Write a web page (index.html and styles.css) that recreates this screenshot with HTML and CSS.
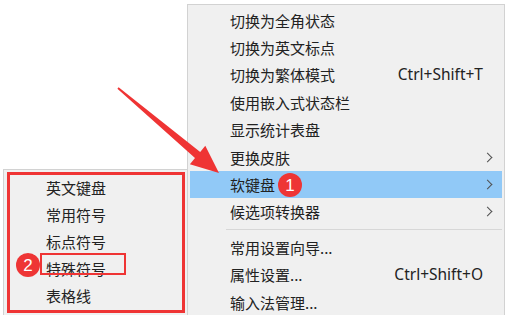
FILE: index.html
```html
<!DOCTYPE html>
<html lang="zh-CN">
<head>
<meta charset="utf-8">
<link rel="stylesheet" href="styles.css">
</head>
<body>
<div class="canvas">
  <div class="menu main-menu">
    <div class="item"><span class="label">切换为全角状态</span></div>
    <div class="item"><span class="label">切换为英文标点</span></div>
    <div class="item"><span class="label">切换为繁体模式</span><span class="key">Ctrl+Shift+T</span></div>
    <div class="item"><span class="label">使用嵌入式状态栏</span></div>
    <div class="item"><span class="label">显示统计表盘</span></div>
    <div class="item"><span class="label">更换皮肤</span><span class="chev"></span></div>
    <div class="item active"><span class="label">软键盘</span><span class="chev"></span></div>
    <div class="item"><span class="label">候选项转换器</span><span class="chev"></span></div>
    <div class="sep"></div>
    <div class="item"><span class="label">常用设置向导...</span></div>
    <div class="item"><span class="label">属性设置...</span><span class="key">Ctrl+Shift+O</span></div>
    <div class="item"><span class="label">输入法管理...</span></div>
  </div>

  <div class="menu sub-menu">
    <div class="sub-item">英文键盘</div>
    <div class="sub-item">常用符号</div>
    <div class="sub-item">标点符号</div>
    <div class="sub-item">特殊符号</div>
    <div class="sub-item">表格线</div>
  </div>

  <div class="box-big"></div>
  <div class="box-small"></div>

  <svg class="arrow" width="513" height="315" viewBox="0 0 513 315">
    <polygon fill="#ef3434" points="117.4,88.8 118.6,87.2 200.2,151.9 205.3,145.8 219,173 189.9,164.2 195,158.1"/>
  </svg>

  <div class="badge badge-1">1</div>
  <div class="badge badge-2">2</div>
</div>
</body>
</html>
```
FILE: styles.css
```css
html, body {
  margin: 0;
  padding: 0;
  width: 513px;
  height: 315px;
  overflow: hidden;
  background: #ffffff;
}
.canvas {
  position: relative;
  width: 513px;
  height: 315px;
  overflow: hidden;
  font-family: "Noto Sans CJK SC", "Noto Sans", sans-serif;
  font-size: 15px;
  color: #222222;
}
.menu {
  position: absolute;
  background: #f0f0f0;
  box-sizing: border-box;
  border: 1px solid #d2d2d2;
  overflow: hidden;
}
.main-menu {
  left: 187px;
  top: 4px;
  width: 318px;
  height: 311px;
  border-bottom: none;
  padding: 1.5px 2px 0 2px;
  display: flex;
  flex-direction: column;
}
.item {
  height: 27.4px;
  display: flex;
  align-items: center;
  padding-left: 40px;
  padding-right: 10px;
  flex: none;
}
.item .label {
  flex: 1;
  line-height: 1;
}
.item .key {
  font-family: "Noto Sans", sans-serif;
  font-size: 15.5px;
  line-height: 1;
  margin-right: 9px;
}
.item.active {
  background: #91c9f7;
}
.chev {
  width: 6px;
  height: 6px;
  border-right: 1.6px solid #505050;
  border-top: 1.6px solid #505050;
  transform: rotate(45deg);
  margin-right: 1px;
}
.sep {
  flex: none;
  height: 8px;
  display: flex;
  align-items: center;
  padding-left: 36px;
}
.sep::after {
  content: "";
  display: block;
  width: 100%;
  height: 1px;
  background: #d7d7d7;
}
.sub-menu {
  left: 3px;
  top: 169px;
  width: 185px;
  height: 146px;
  border-bottom: none;
  padding-top: 3.5px;
  display: flex;
  flex-direction: column;
}
.sub-item {
  height: 27px;
  display: flex;
  align-items: center;
  padding-left: 42px;
  line-height: 1;
  flex: none;
}
.box-big {
  position: absolute;
  left: 7px;
  top: 172px;
  width: 178px;
  height: 141px;
  box-sizing: border-box;
  border: 3px solid #ef3434;
}
.box-small {
  position: absolute;
  left: 40px;
  top: 253px;
  width: 86px;
  height: 22px;
  box-sizing: border-box;
  border: 2px solid #ef3434;
}
.arrow {
  position: absolute;
  left: 0;
  top: 0;
}
.badge {
  position: absolute;
  width: 24px;
  height: 24px;
  border-radius: 50%;
  background: #ee3535;
  color: #ffffff;
  font-family: "Liberation Sans", Arial, sans-serif;
  font-size: 17px;
  display: flex;
  align-items: center;
  justify-content: center;
  line-height: 1;
}
.badge-1 {
  left: 278px;
  top: 173px;
}
.badge-2 {
  left: 16px;
  top: 253px;
}
```
